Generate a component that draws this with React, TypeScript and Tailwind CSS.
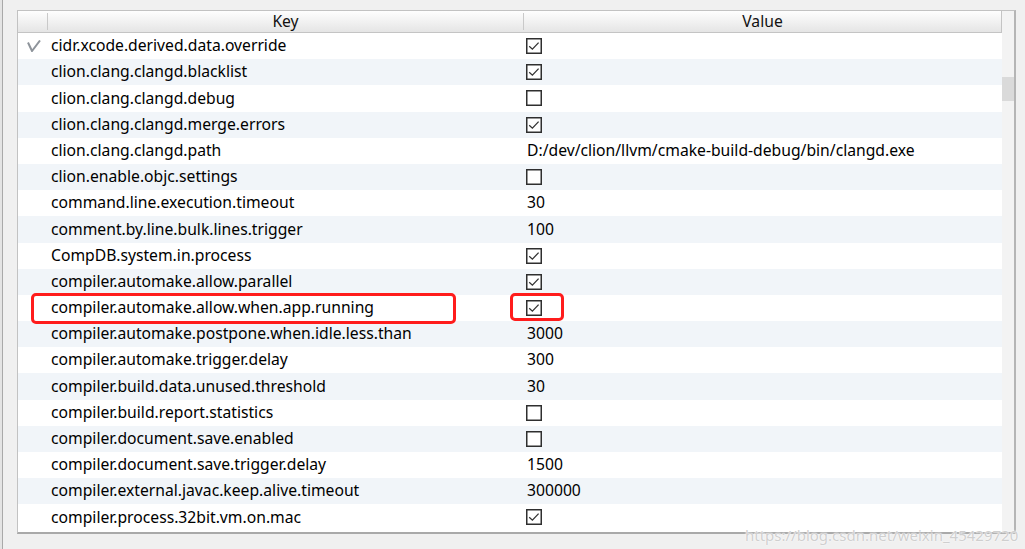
import React from "react";

type Row = { key: string; value: boolean | string; mark?: boolean };

const rows: Row[] = [
  { key: "cidr.xcode.derived.data.override", value: true, mark: true },
  { key: "clion.clang.clangd.blacklist", value: true },
  { key: "clion.clang.clangd.debug", value: false },
  { key: "clion.clang.clangd.merge.errors", value: true },
  { key: "clion.clang.clangd.path", value: "D:/dev/clion/llvm/cmake-build-debug/bin/clangd.exe" },
  { key: "clion.enable.objc.settings", value: false },
  { key: "command.line.execution.timeout", value: "30" },
  { key: "comment.by.line.bulk.lines.trigger", value: "100" },
  { key: "CompDB.system.in.process", value: true },
  { key: "compiler.automake.allow.parallel", value: true },
  { key: "compiler.automake.allow.when.app.running", value: true },
  { key: "compiler.automake.postpone.when.idle.less.than", value: "3000" },
  { key: "compiler.automake.trigger.delay", value: "300" },
  { key: "compiler.build.data.unused.threshold", value: "30" },
  { key: "compiler.build.report.statistics", value: false },
  { key: "compiler.document.save.enabled", value: false },
  { key: "compiler.document.save.trigger.delay", value: "1500" },
  { key: "compiler.external.javac.keep.alive.timeout", value: "300000" },
  { key: "compiler.process.32bit.vm.on.mac", value: true },
];

function CheckBox({ checked }: { checked: boolean }) {
  return (
    <svg width="16" height="16" viewBox="0 0 16 16" className="block">
      <rect x="0.75" y="0.75" width="14.5" height="14.5" fill="#ffffff" stroke="#2f2f2f" strokeWidth="1.5" />
      {checked && (
        <polyline points="3.2,8.2 6.4,11.2 12.6,4.6" fill="none" stroke="#333333" strokeWidth="1.3" />
      )}
    </svg>
  );
}

function Mark() {
  return (
    <svg width="14" height="12" viewBox="0 0 14 12" className="block">
      <polyline points="1,2.5 5,11 13,0.5" fill="none" stroke="#8e949b" strokeWidth="2" />
    </svg>
  );
}

export default function App() {
  return (
    <div
      className="relative flex h-[549px] w-[1025px] overflow-hidden bg-[#f0f0f0] text-[15.7px] text-black"
      style={{ fontFamily: '"Noto Sans", "Open Sans", sans-serif' }}
    >
      <div className="flex h-full w-[3px] shrink-0">
        <div className="h-full w-[2px] bg-[#e4e4e4]" />
        <div className="h-full w-[1px] bg-[#a9a9a9]" />
      </div>
      <div className="ml-[14px] mt-[10px] flex h-[524px] w-[999px] shrink-0 border-t border-l border-r-2 border-b-2 border-t-[#c2c2c2] border-l-[#c2c2c2] border-r-[#b5b5b5] border-b-[#a9a9a9] bg-white">
        <div className="flex w-[984px] shrink-0 flex-col">
          <div className="flex h-[22px] shrink-0 border-b border-r border-[#c4c4c4] bg-gradient-to-b from-[#fefefe] to-[#e5e5e5] text-[#111]">
            <div className="w-[30px] shrink-0 border-r border-[#c9c9c9] my-[2px]" />
            <div className="flex w-[476px] shrink-0 items-center justify-center border-r border-[#c9c9c9] my-[2px] leading-none">Key</div>
            <div className="flex flex-1 items-center justify-center leading-none">Value</div>
          </div>
          {rows.map((r, i) => (
            <div
              key={r.key}
              className={`flex h-[26.2px] shrink-0 items-center ${i % 2 === 1 ? "bg-[#f1f5f9]" : "bg-white"}`}
            >
              <div className="flex w-[30px] shrink-0 items-center justify-center pl-[2px]">{r.mark ? <Mark /> : null}</div>
              <div className="w-[476px] shrink-0 whitespace-nowrap pl-[3px] leading-none">{r.key}</div>
              <div className="flex flex-1 items-center whitespace-nowrap pl-[2px] leading-none">
                {typeof r.value === "boolean" ? <CheckBox checked={r.value} /> : <span className="pl-[1px]">{r.value}</span>}
              </div>
            </div>
          ))}
        </div>
        <div className="relative flex-1 bg-[#f3f3f3]">
          <div className="absolute left-0 right-0 top-[66px] h-[24px] bg-[#dadada]" />
        </div>
      </div>

      <div className="pointer-events-none absolute left-[31px] top-[293px] h-[31px] w-[425px] rounded-[5px] border-[3.5px] border-[#ff1c1c]" />
      <div className="pointer-events-none absolute left-[510px] top-[293px] h-[28px] w-[54px] rounded-[5px] border-[3.5px] border-[#ff1c1c]" />

      <div className="pointer-events-none absolute left-[745px] top-[524px] whitespace-nowrap text-[15px] text-[#cfcfcf] [text-shadow:0_0_2px_#ffffff,0_0_1px_#ffffff]">
        https://blog.csdn.net/weixin_45429720
      </div>
    </div>
  );
}
